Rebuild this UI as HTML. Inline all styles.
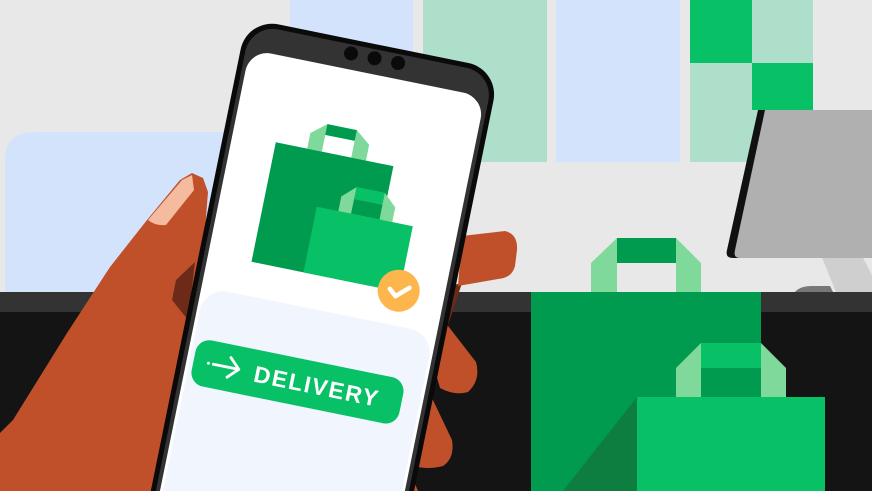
<!DOCTYPE html>
<html><head><meta charset="utf-8"><style>
html,body{margin:0;padding:0;background:#e8e8e8;overflow:hidden;width:872px;height:491px;}
svg{display:block}
</style></head><body>
<svg width="872" height="491" viewBox="0 0 872 491" xmlns="http://www.w3.org/2000/svg">
<rect width="872" height="491" fill="#e8e8e8"/>
<rect x="290" y="0" width="123" height="162" fill="#d3e3fc"/>
<rect x="423" y="0" width="124" height="162" fill="#aedfca"/>
<rect x="556" y="0" width="124" height="162" fill="#d3e3fc"/>
<rect x="690" y="0" width="123" height="162" fill="#aedfca"/>
<rect x="690" y="0" width="62" height="63" fill="#08c167"/>
<rect x="752" y="63" width="61" height="47" fill="#08c167"/>
<path d="M5 292 V160 Q5 132 35 132 H300 V292 Z" fill="#d3e3fc"/>
<path d="M812 233 H850 L872 275 V292 H836 Z" fill="#cfcfcf"/>
<path d="M795 292 Q800 286 812 286 H830 L833 292 Z" fill="#777"/>
<path d="M758 110 H872 V258 H733 Q725 258 727 250 Z" fill="#111"/>
<path d="M765 110 H872 V258 H740 Q733 258 735 250 Z" fill="#b0b0b0"/>
<rect x="0" y="292" width="872" height="20" fill="#333"/>
<rect x="0" y="312" width="872" height="179" fill="#141414"/>
<path d="M591 292 V263 L617 238 H676 L701 263 V292 Z" fill="#7ed99a"/>
<rect x="617" y="238" width="59" height="25" fill="#009b4f"/>
<rect x="617" y="263" width="59" height="29" fill="#e8e8e8"/>
<rect x="531" y="292" width="230" height="199" fill="#009b4f"/>
<path d="M637 397 V491 H563 Z" fill="#0d7e3f"/>
<path d="M676 397 V368 L701 343 H761 L786 368 V397 Z" fill="#7ed99a"/>
<rect x="701" y="343" width="60" height="25" fill="#08c167"/>
<rect x="701" y="368" width="60" height="29" fill="#009b4f"/>
<rect x="637" y="397" width="188" height="94" fill="#08c167"/>
<path d="M440 288 L462 283 L448 325 L432 395 L418 470 L412 491 L392 491 Z" fill="#6e2a18"/>
<path d="M462 236 L505 231 Q518 234 517 250 L515 266 Q512 278 498 279 L458 286 Z" fill="#c0502a"/>
<path d="M445 322 L476 362 Q481 380 468 392 Q455 396 440 388 L432 360 Z" fill="#c0502a"/>
<path d="M432 398 L452 440 Q455 458 443 466 Q428 470 414 466 L420 420 Z" fill="#c0502a"/>
<path d="M410 472 L418 491 H404 Z" fill="#c0502a"/>
<path d="M0 491 V433 L13 420 L67 333 L110 267 L147 220 L180 180 L192 173 L203 178 L208 192 L205 230 L200 260 L195 290 L180 491 Z" fill="#c0502a"/>
<path d="M176 280 L195 262 L188 320 L172 300 Z" fill="#6e2a18"/>
<path d="M148 220 L182 180 L192 175 L194 190 L166 225 Q155 226 148 220 Z" fill="#f4bb9f"/>
<g transform="translate(247,18) rotate(11.5)">
<rect x="0" y="0" width="258" height="640" rx="32" fill="#0a0a0a"/>
<rect x="5" y="5" width="248" height="630" rx="28" fill="#333"/>
<rect x="9" y="30" width="240" height="610" rx="22" fill="#ffffff"/>
<circle cx="109" cy="14" r="7" fill="#0a0a0a"/>
<circle cx="133" cy="14" r="7" fill="#0a0a0a"/>
<circle cx="157" cy="14" r="7" fill="#0a0a0a"/>
<rect x="12" y="272" width="234" height="360" rx="24" fill="#f1f5fe"/>
<path d="M85 116 V100 L100 88 H130 L145 100 V116 Z" fill="#7ed99a"/>
<rect x="100" y="88" width="30" height="11" fill="#009b4f"/>
<rect x="100" y="99" width="30" height="17" fill="#fff"/>
<rect x="53" y="116" width="120" height="122" fill="#009b4f"/>
<path d="M128 171 V156 L141 144 H170 L183 156 V171 Z" fill="#7ed99a"/>
<rect x="141" y="144" width="29" height="12" fill="#08c167"/>
<rect x="141" y="156" width="29" height="15" fill="#009b4f"/>
<rect x="106" y="171" width="98" height="67" fill="#08c167"/>
<circle cx="203" cy="237" r="21" fill="#fdb64b"/>
<path d="M194 237 L201 243 L213 232" stroke="#fff" stroke-width="4.5" fill="none" stroke-linecap="round" stroke-linejoin="round"/>
<rect x="16" y="323" width="212" height="47" rx="14" fill="#08c167"/>
<circle cx="31" cy="346" r="1.5" fill="#fff"/>
<path d="M36 346 H62 M52 336 L62 346 L52 356" stroke="#fff" stroke-width="2.8" fill="none" stroke-linecap="round" stroke-linejoin="round"/>
<text x="78" y="355" font-family="Liberation Sans, sans-serif" font-weight="bold" font-size="23" fill="#fff" textLength="126" lengthAdjust="spacing">DELIVERY</text>
</g>
</svg>
</body></html>
